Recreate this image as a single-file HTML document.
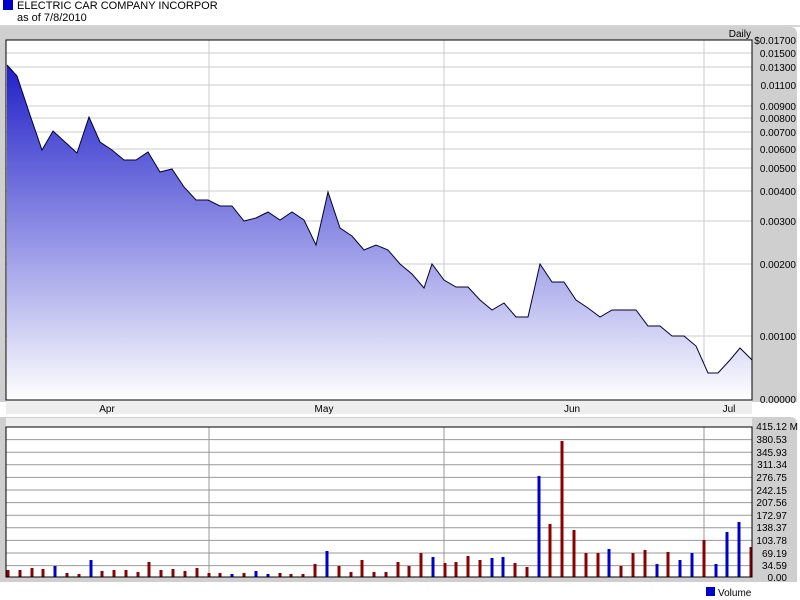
<!DOCTYPE html><html><head><style>body{margin:0;background:#fff}svg{display:block;font-family:"Liberation Sans",sans-serif}</style></head><body>
<svg width="800" height="600" viewBox="0 0 800 600">
<defs><linearGradient id="g" x1="0" y1="0" x2="0" y2="1"><stop offset="0" stop-color="#2020c8"/><stop offset="0.55" stop-color="#9a9ae8"/><stop offset="1" stop-color="#ffffff"/></linearGradient></defs>
<rect x="3" y="0" width="10" height="10" fill="#0000cc"/>
<text x="17" y="9" font-size="11">ELECTRIC CAR COMPANY INCORPOR</text>
<text x="17" y="21" font-size="11">as of 7/8/2010</text>
<line x1="0" y1="26" x2="800" y2="26" stroke="#aaa"/>
<path d="M0 27 H790 Q797 27 797 34 V402 H0Z" fill="#cfcfcf"/>
<path d="M0 417 H790 Q797 417 797 424 V582 H0Z" fill="#cfcfcf"/>
<rect x="6" y="400" width="746" height="14" fill="#eeeeee"/>
<rect x="6" y="418" width="746" height="9" fill="#eeeeee"/>
<rect x="6" y="40" width="746" height="360" fill="#fff"/>
<rect x="6" y="427" width="746" height="150" fill="#fff"/>
<g stroke="#ccc">
<path d="M6 53H752M6 67H752M6 85H752M6 106H752M6 118H752M6 132H752M6 149H752M6 168H752M6 191H752M6 221H752M6 264H752M6 336H752M209 40V400M444 40V400M704 40V400"/>
</g>
<path d="M7 65 L17 76 L30 115 L42 150 L53 131 L65 142 L77 153 L89 117 L100 142 L112 150 L124 160 L136 160 L148 152 L160 172 L172 169 L184 187 L196 200 L208 200 L220 206 L232 206 L244 221 L256 218 L268 212 L280 220 L292 212 L304 220 L316 245 L328 192 L340 228 L352 236 L364 250 L376 245 L388 250 L400 264 L412 274 L424 288 L432 264 L444 280 L456 287 L468 287 L480 300 L492 310 L504 303 L516 317 L528 317 L540 264 L552 282 L564 282 L576 300 L588 308 L600 317 L612 310 L624 310 L636 310 L648 326 L660 326 L672 336 L684 336 L696 346 L708 373 L718 373 L730 360 L740 348 L752 360 V400 H7Z" fill="url(#g)"/>
<path d="M7 65 L17 76 L30 115 L42 150 L53 131 L65 142 L77 153 L89 117 L100 142 L112 150 L124 160 L136 160 L148 152 L160 172 L172 169 L184 187 L196 200 L208 200 L220 206 L232 206 L244 221 L256 218 L268 212 L280 220 L292 212 L304 220 L316 245 L328 192 L340 228 L352 236 L364 250 L376 245 L388 250 L400 264 L412 274 L424 288 L432 264 L444 280 L456 287 L468 287 L480 300 L492 310 L504 303 L516 317 L528 317 L540 264 L552 282 L564 282 L576 300 L588 308 L600 317 L612 310 L624 310 L636 310 L648 326 L660 326 L672 336 L684 336 L696 346 L708 373 L718 373 L730 360 L740 348 L752 360" fill="none" stroke="#000033"/>
<g stroke="#999"><path d="M6 439.6H752M6 452.2H752M6 464.8H752M6 477.4H752M6 490H752M6 502.6H752M6 515.2H752M6 527.8H752M6 540.4H752M6 553H752M6 565.6H752M209 427V577M444 427V577M704 427V577"/></g>
<g stroke-width="3" stroke="#8b0000"><path d="M8 570V577M20 570V577M32 568V577M43 569V577M67 573V577M79 574V577M102 571V577M114 570V577M126 570V577M138 572V577M149 562V577M161 570V577M173 569V577M185 571V577M197 568V577M209 573V577M220 573V577M244 573V577M280 573V577M291 574V577M303 574V577M315 564V577M339 566V577M351 572V577M362 560V577M374 572V577M386 572V577M398 562V577M409 566V577M421 553V577M445 563V577M456 562V577M468 556V577M480 560V577M515 563V577M527 567V577M550 524V577M562 441V577M574 530V577M586 553V577M598 553V577M621 566V577M633 553V577M645 550V577M668 552V577M704 540V577M751 547V577"/></g>
<g stroke-width="3" stroke="#0000cc"><path d="M55 566V577M91 560V577M232 574V577M256 571V577M268 574V577M327 551V577M433 557V577M492 558V577M503 557V577M539 476V577M609 549V577M657 564V577M680 560V577M692 553V577M716 564V577M727 532V577M739 522V577"/></g>
<rect x="6" y="40" width="746" height="360" fill="none" stroke="#000"/>
<rect x="6" y="427" width="746" height="150" fill="none" stroke="#000"/>
<g font-size="10" text-anchor="middle"><text x="107" y="412">Apr</text><text x="324" y="412">May</text><text x="572" y="412">Jun</text><text x="729" y="412">Jul</text></g>
<text x="751" y="37" font-size="10" text-anchor="end">Daily</text>
<g font-size="10" text-anchor="end">
<text x="796" y="44">$0.01700</text><text x="796" y="57">0.01500</text><text x="796" y="71">0.01300</text><text x="796" y="89">0.01100</text><text x="796" y="110">0.00900</text><text x="796" y="122">0.00800</text><text x="796" y="136">0.00700</text><text x="796" y="153">0.00600</text><text x="796" y="172">0.00500</text><text x="796" y="195">0.00400</text><text x="796" y="225">0.00300</text><text x="796" y="268">0.00200</text><text x="796" y="340">0.00100</text><text x="796" y="403">0.00000</text>
<text x="798" y="430">415.12 M</text><text x="787" y="443">380.53</text><text x="787" y="456">345.93</text><text x="787" y="468">311.34</text><text x="787" y="481">276.75</text><text x="787" y="494">242.15</text><text x="787" y="506">207.56</text><text x="787" y="519">172.97</text><text x="787" y="531">138.37</text><text x="787" y="544">103.78</text><text x="787" y="557">69.19</text><text x="787" y="569">34.59</text><text x="787" y="581">0.00</text>
</g>
<rect x="706" y="587" width="9" height="9" fill="#0000cc"/>
<text x="718" y="596" font-size="10">Volume</text>
</svg></body></html>
